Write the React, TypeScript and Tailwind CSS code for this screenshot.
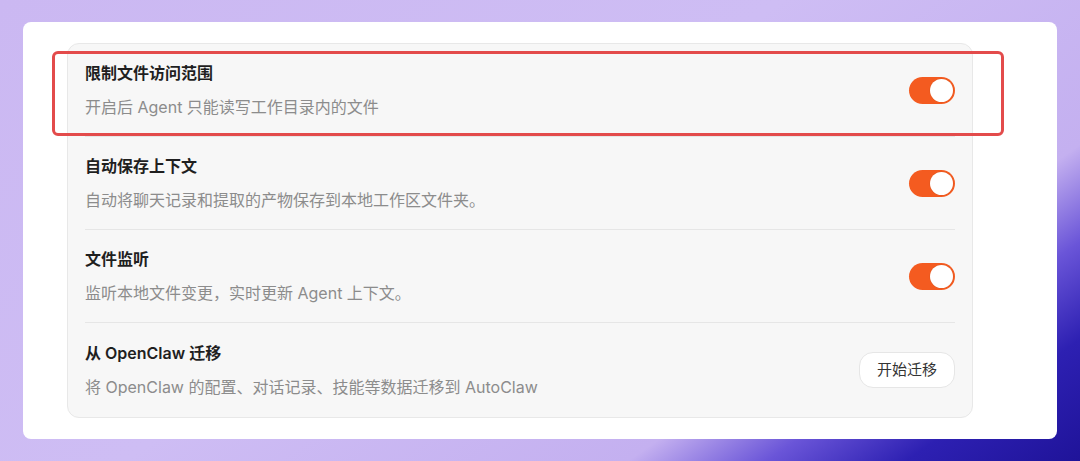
import React from "react";

const font = { fontFamily: '"Inter", "Noto Sans CJK SC", sans-serif' };

function Toggle() {
  return (
    <div className="flex h-[27px] w-[46px] shrink-0 items-center justify-end rounded-full bg-[#f45b20] p-[2px]">
      <div className="h-[23px] w-[23px] rounded-full bg-white shadow-[0_0_0_0.5px_#e0561e]" />
    </div>
  );
}

type Row = { title: string; desc: string; action: "toggle" | "button" };

const rows: Row[] = [
  { title: "限制文件访问范围", desc: "开启后 Agent 只能读写工作目录内的文件", action: "toggle" },
  { title: "自动保存上下文", desc: "自动将聊天记录和提取的产物保存到本地工作区文件夹。", action: "toggle" },
  { title: "文件监听", desc: "监听本地文件变更，实时更新 Agent 上下文。", action: "toggle" },
  { title: "从 OpenClaw 迁移", desc: "将 OpenClaw 的配置、对话记录、技能等数据迁移到 AutoClaw", action: "button" },
];

export default function App() {
  return (
    <div
      className="h-[461px] w-full overflow-hidden bg-[linear-gradient(145deg,#cbb8f2_0%,#cebdf4_45%,#c4b0f0_74%,#6a55d8_82%,#2d20b2_90%,#1f1399_100%)] px-[23px] pt-[22px]"
      style={font}
    >
      <div className="relative rounded-[8px] bg-white pb-[21px] pl-[44px] pr-[84px] pt-[21px]">
        <div className="rounded-[12px] border border-[#e8e8e8] bg-[#f7f7f7] px-[17px]">
          {rows.map((r, i) => (
            <div
              key={i}
              className={`flex items-center justify-between ${i < rows.length - 1 ? "border-b border-[#e6e6e6]" : ""} ${i === 3 ? "h-[94px]" : "h-[93px]"}`}
            >
              <div className="flex flex-col">
                <div className="text-[16px] font-semibold leading-[20px] text-[#1f1f1f]">{r.title}</div>
                <div className="mt-[14px] text-[16px] leading-[20px] text-[#8c8c8c]">{r.desc}</div>
              </div>
              {r.action === "toggle" ? (
                <Toggle />
              ) : (
                <button className="flex h-[36px] w-[96px] items-center justify-center rounded-[14px] border border-[#e6e6e6] bg-white text-[15px] text-[#333333]">
                  开始迁移
                </button>
              )}
            </div>
          ))}
        </div>
        <div className="pointer-events-none absolute left-[29px] top-[29px] h-[85px] w-[952px] rounded-[6px] border-[3px] border-[#e34b4b]" />
      </div>
    </div>
  );
}
